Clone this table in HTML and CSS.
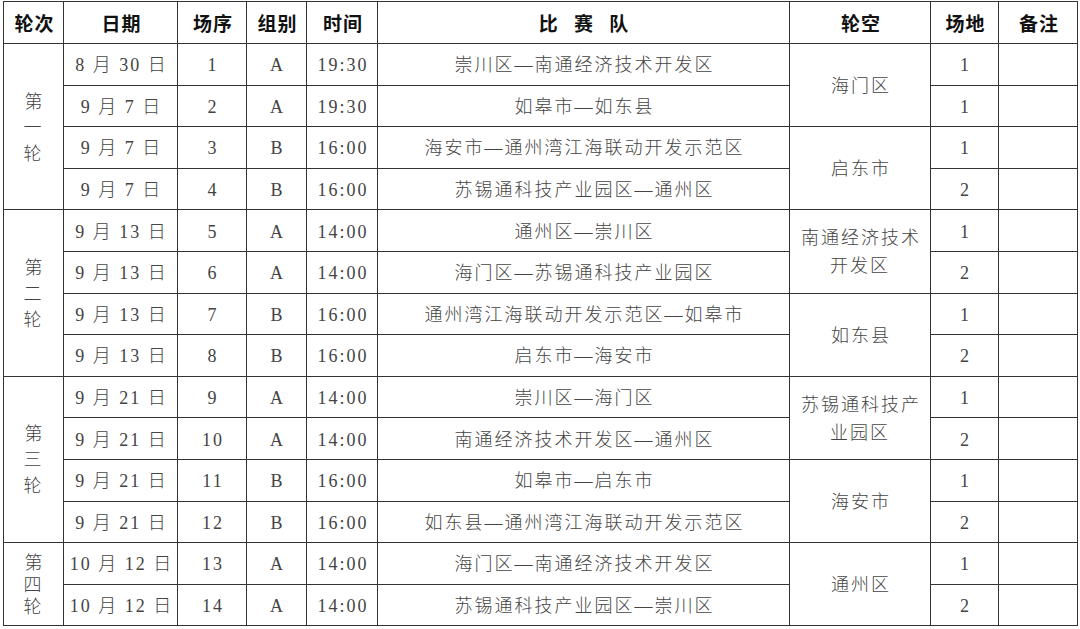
FILE: index.html
```html
<!DOCTYPE html>
<html lang="zh-CN">
<head>
<meta charset="utf-8">
<link rel="stylesheet" href="styles.css">
</head>
<body>
<table class="sched">
  <colgroup>
    <col class="c-round"><col class="c-date"><col class="c-no"><col class="c-grp"><col class="c-time"><col class="c-team"><col class="c-bye"><col class="c-field"><col class="c-note">
  </colgroup>
  <thead>
    <tr>
      <th>轮次</th><th>日期</th><th>场序</th><th>组别</th><th>时间</th><th class="wide">比 赛 队</th><th>轮空</th><th>场地</th><th>备注</th>
    </tr>
  </thead>
  <tbody>
    <tr>
      <td rowspan="4" class="round">第<br>一<br>轮</td>
      <td>8 月 30 日</td><td>1</td><td>A</td><td>19:30</td><td>崇川区—南通经济技术开发区</td>
      <td rowspan="2">海门区</td><td>1</td><td></td>
    </tr>
    <tr>
      <td>9 月 7 日</td><td>2</td><td>A</td><td>19:30</td><td>如皋市—如东县</td><td>1</td><td></td>
    </tr>
    <tr>
      <td>9 月 7 日</td><td>3</td><td>B</td><td>16:00</td><td>海安市—通州湾江海联动开发示范区</td>
      <td rowspan="2">启东市</td><td>1</td><td></td>
    </tr>
    <tr>
      <td>9 月 7 日</td><td>4</td><td>B</td><td>16:00</td><td>苏锡通科技产业园区—通州区</td><td>2</td><td></td>
    </tr>

    <tr>
      <td rowspan="4" class="round">第<br>二<br>轮</td>
      <td>9 月 13 日</td><td>5</td><td>A</td><td>14:00</td><td>通州区—崇川区</td>
      <td rowspan="2" class="two">南通经济技术<br>开发区</td><td>1</td><td></td>
    </tr>
    <tr>
      <td>9 月 13 日</td><td>6</td><td>A</td><td>14:00</td><td>海门区—苏锡通科技产业园区</td><td>2</td><td></td>
    </tr>
    <tr>
      <td>9 月 13 日</td><td>7</td><td>B</td><td>16:00</td><td>通州湾江海联动开发示范区—如皋市</td>
      <td rowspan="2">如东县</td><td>1</td><td></td>
    </tr>
    <tr>
      <td>9 月 13 日</td><td>8</td><td>B</td><td>16:00</td><td>启东市—海安市</td><td>2</td><td></td>
    </tr>

    <tr>
      <td rowspan="4" class="round">第<br>三<br>轮</td>
      <td>9 月 21 日</td><td>9</td><td>A</td><td>14:00</td><td>崇川区—海门区</td>
      <td rowspan="2" class="two">苏锡通科技产<br>业园区</td><td>1</td><td></td>
    </tr>
    <tr>
      <td>9 月 21 日</td><td>10</td><td>A</td><td>14:00</td><td>南通经济技术开发区—通州区</td><td>2</td><td></td>
    </tr>
    <tr>
      <td>9 月 21 日</td><td>11</td><td>B</td><td>16:00</td><td>如皋市—启东市</td>
      <td rowspan="2">海安市</td><td>1</td><td></td>
    </tr>
    <tr>
      <td>9 月 21 日</td><td>12</td><td>B</td><td>16:00</td><td>如东县—通州湾江海联动开发示范区</td><td>2</td><td></td>
    </tr>

    <tr>
      <td rowspan="2" class="round short">第<br>四<br>轮</td>
      <td>10 月 12 日</td><td>13</td><td>A</td><td>14:00</td><td>海门区—南通经济技术开发区</td>
      <td rowspan="2">通州区</td><td>1</td><td></td>
    </tr>
    <tr>
      <td>10 月 12 日</td><td>14</td><td>A</td><td>14:00</td><td>苏锡通科技产业园区—崇川区</td><td>2</td><td></td>
    </tr>
  </tbody>
</table>
</body>
</html>
```

FILE: styles.css
```css
html, body {
  margin: 0;
  padding: 0;
  background: #ffffff;
}

body {
  padding: 1px 0 0 3px;
}

.sched {
  border-collapse: collapse;
  table-layout: fixed;
  width: 1074px;
  font-family: "Liberation Serif", "Noto Sans CJK SC", serif;
  font-size: 18px;
  color: #444;
  border: 1.5px solid #333;
}

.c-round { width: 60px; }
.c-date { width: 114px; }
.c-no { width: 69px; }
.c-grp { width: 60px; }
.c-time { width: 71px; }
.c-team { width: 412px; }
.c-bye { width: 141px; }
.c-field { width: 68px; }
.c-note { width: 79px; }

.sched th,
.sched td {
  border: 1px solid #333;
  padding: 0;
  text-align: center;
  vertical-align: middle;
  letter-spacing: 2px;
  text-indent: 2px;
  line-height: 22px;
}

.sched th {
  height: 41px;
  font-family: "Noto Sans CJK SC", sans-serif;
  font-weight: 700;
  font-size: 19px;
  color: #111;
  letter-spacing: 1px;
}

.sched th.wide {
  letter-spacing: 6px;
  text-indent: 6px;
}

.sched td {
  height: 38.6px;
  padding-top: 2px;
  font-weight: 300;
}

.sched td.round {
  line-height: 26px;
}

.sched td.round.short {
  line-height: 22px;
}

.sched td.two {
  line-height: 28px;
}
```
